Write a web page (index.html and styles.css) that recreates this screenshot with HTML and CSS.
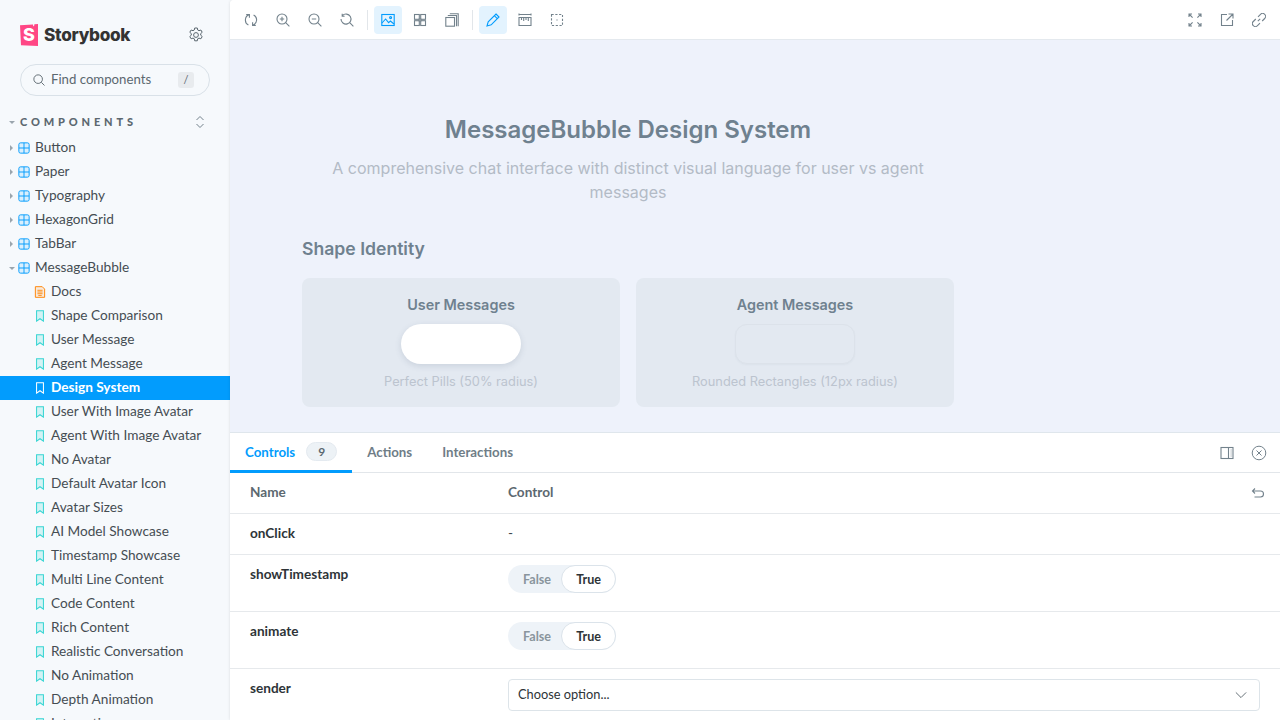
FILE: index.html
```html
<!DOCTYPE html>
<html>
<head>
    <title>MessageBubble / Design System - Storybook</title>
    <link rel="stylesheet" href="styles.css">
</head>
<body>
    <svg class="sprites" width="0" height="0">
        <symbol id="i-component" viewBox="0 0 14 14">
            <rect x="1" y="1" width="12" height="12" rx="2" fill="#a6dcfe" fill-opacity=".35" stroke="#029cfd" stroke-width="1.1"/>
            <path d="M7 1v12M1 7h12" stroke="#029cfd" stroke-width="1.1" fill="none"/>
        </symbol>
        <symbol id="i-story" viewBox="0 0 14 14">
            <path d="M3 1h8v12L7 10.2 3 13z" fill="#37d5d3" fill-opacity=".18" stroke="#37d5d3" stroke-width="1.2"/>
        </symbol>
        <symbol id="i-story-on" viewBox="0 0 14 14">
            <path d="M3 1h8v12L7 10.2 3 13z" fill="none" stroke="#fff" stroke-width="1.2"/>
        </symbol>
        <symbol id="i-docs" viewBox="0 0 14 14">
            <path d="M1.6.8h8l2.8 2.8v9.6H1.6z" fill="#ff8300" fill-opacity=".12" stroke="#ff8300" stroke-width="1.1"/>
            <path d="M4 5h6M4 7h6M4 9h6M5 11h4" stroke="#ff8300" stroke-width="1"/>
        </symbol>
    </svg>

    <div class="app">
        <aside class="sidebar">
            <div class="brand">
                <div class="logo">
                    <svg width="18" height="22" viewBox="0 0 18 22">
                        <path d="M0 1.2 13 .4l.2 1.8.9-.1.3-1.8L18 .1V21.9L1 21.2z" fill="#ff4785"/>
                    </svg>
                    <span class="logo-s">S</span>
                </div>
                <span class="brand-name">Storybook</span>
                <svg class="gear" width="16" height="16" viewBox="0 0 16 16" fill="none" stroke="#5c6870" stroke-width="1">
                    <circle cx="8" cy="8" r="2.4"/>
                    <path d="M6.7 1h2.6l.4 2 1.3.7 1.9-.7 1.3 2.3-1.5 1.3v1.6l1.5 1.3-1.3 2.3-1.9-.7-1.3.7-.4 2H6.7l-.4-2-1.3-.7-1.9.7-1.3-2.3 1.500-1.300V6.600L1.800 5.300l1.300-2.300 1.900.7 1.300-.7z" stroke-linejoin="round"/>
                </svg>
            </div>

            <div class="search">
                <svg width="12" height="12" viewBox="0 0 14 14" fill="none" stroke="#5c6870" stroke-width="1.1">
                    <circle cx="6" cy="6" r="5"/>
                    <path d="M9.7 9.7 13.4 13.4"/>
                </svg>
                <span class="search-text">Find components</span>
                <span class="search-key">/</span>
            </div>

            <div class="section-head">
                <span class="caret-down"></span>
                <span class="section-title">COMPONENTS</span>
                <svg class="section-toggle" width="10" height="14" viewBox="0 0 10 14" fill="none" stroke="#73828c" stroke-width="1">
                    <path d="M1.5 5 5 1.5 8.5 5M1.5 9 5 12.5 8.5 9"/>
                </svg>
            </div>

            <nav class="tree">
                <div class="row"><span class="caret-right"></span><svg class="ico"><use href="#i-component"/></svg>Button</div>
                <div class="row"><span class="caret-right"></span><svg class="ico"><use href="#i-component"/></svg>Paper</div>
                <div class="row"><span class="caret-right"></span><svg class="ico"><use href="#i-component"/></svg>Typography</div>
                <div class="row"><span class="caret-right"></span><svg class="ico"><use href="#i-component"/></svg>HexagonGrid</div>
                <div class="row"><span class="caret-right"></span><svg class="ico"><use href="#i-component"/></svg>TabBar</div>
                <div class="row"><span class="caret-down"></span><svg class="ico"><use href="#i-component"/></svg>MessageBubble</div>
                <div class="row child"><svg class="ico"><use href="#i-docs"/></svg>Docs</div>
                <div class="row child"><svg class="ico"><use href="#i-story"/></svg>Shape Comparison</div>
                <div class="row child"><svg class="ico"><use href="#i-story"/></svg>User Message</div>
                <div class="row child"><svg class="ico"><use href="#i-story"/></svg>Agent Message</div>
                <div class="row child selected"><svg class="ico"><use href="#i-story-on"/></svg>Design System</div>
                <div class="row child"><svg class="ico"><use href="#i-story"/></svg>User With Image Avatar</div>
                <div class="row child"><svg class="ico"><use href="#i-story"/></svg>Agent With Image Avatar</div>
                <div class="row child"><svg class="ico"><use href="#i-story"/></svg>No Avatar</div>
                <div class="row child"><svg class="ico"><use href="#i-story"/></svg>Default Avatar Icon</div>
                <div class="row child"><svg class="ico"><use href="#i-story"/></svg>Avatar Sizes</div>
                <div class="row child"><svg class="ico"><use href="#i-story"/></svg>AI Model Showcase</div>
                <div class="row child"><svg class="ico"><use href="#i-story"/></svg>Timestamp Showcase</div>
                <div class="row child"><svg class="ico"><use href="#i-story"/></svg>Multi Line Content</div>
                <div class="row child"><svg class="ico"><use href="#i-story"/></svg>Code Content</div>
                <div class="row child"><svg class="ico"><use href="#i-story"/></svg>Rich Content</div>
                <div class="row child"><svg class="ico"><use href="#i-story"/></svg>Realistic Conversation</div>
                <div class="row child"><svg class="ico"><use href="#i-story"/></svg>No Animation</div>
                <div class="row child"><svg class="ico"><use href="#i-story"/></svg>Depth Animation</div>
                <div class="row child"><svg class="ico"><use href="#i-story"/></svg>Interactions</div>
            </nav>
        </aside>

        <main class="main">
            <header class="toolbar">
                <button class="tool"><svg viewBox="0 0 14 14"><path d="M5 1.800A5.600 5.600 0 0 0 4.400 12M9 12.200A5.600 5.600 0 0 0 9.600 2"/><path d="M5.400 4.800V1.600H2.200M8.600 9.200v3.200h3.200"/></svg></button>
                <button class="tool"><svg viewBox="0 0 14 14"><circle cx="6" cy="6" r="5"/><path d="M9.700 9.700 13.400 13.400M6 3.800v4.400M3.800 6h4.400"/></svg></button>
                <button class="tool"><svg viewBox="0 0 14 14"><circle cx="6" cy="6" r="5"/><path d="M9.700 9.700 13.400 13.400M3.800 6h4.400"/></svg></button>
                <button class="tool"><svg viewBox="0 0 14 14"><path d="M2.400 2.600A5 5 0 1 1 1 6M9.700 9.700 13.400 13.400M2.200.8v2.400h2.400"/></svg></button>
                <span class="tool-sep"></span>
                <button class="tool on"><svg viewBox="0 0 14 14"><rect x=".8" y="1.500" width="12.400" height="11"/><circle cx="9.600" cy="4.600" r="1"/><path d="M1 10 4.600 6l3 3.600 1.800-1.600 3.600 3"/></svg></button>
                <button class="tool"><svg viewBox="0 0 14 14"><rect x="1.500" y="1.500" width="4.800" height="4.800"/><rect x="7.700" y="1.500" width="4.800" height="4.800"/><rect x="1.500" y="7.700" width="4.800" height="4.800"/><rect x="7.700" y="7.700" width="4.800" height="4.800"/><path d="M5 7h4M7 5v4" stroke-width="2.400" opacity=".4"/></svg></button>
                <button class="tool"><svg viewBox="0 0 14 14"><rect x=".8" y="4.500" width="8.700" height="8.700"/><path d="M2.800 2.500h8.700v10.700M4.800.8h8.400v12.400"/></svg></button>
                <span class="tool-sep"></span>
                <button class="tool on"><svg viewBox="0 0 14 14"><path d="M10 1 13 4l-7.800 7.800L1 13l1.200-4.200zM8.300 2.700l3 3"/></svg></button>
                <button class="tool"><svg viewBox="0 0 14 14"><path d="M1 1.500h12M1 .5v2M13 .5v2M1 4.500h12v8H1zM3.500 4.500v2.500M5.700 4.500v3.500M8 4.500v2.500M10.300 4.500v3.500"/></svg></button>
                <button class="tool"><svg viewBox="0 0 14 14"><rect x="1.500" y="1.500" width="11" height="11" stroke-dasharray="2.200 1.600"/><path d="M6.400 7h1.200"/></svg></button>
                <span class="tool-gap"></span>
                <button class="tool"><svg viewBox="0 0 14 14"><path d="M1 1l3.600 3.600M13 1 9.400 4.600M1 13l3.600-3.600M13 13 9.400 9.400M1 4V1h3M10 1h3v3M1 10v3h3M10 13h3v-3"/></svg></button>
                <button class="tool"><svg viewBox="0 0 14 14"><path d="M7 1.500H1.500v11h11V7M8.500 1H13v4.500M13 1 6.500 7.500"/></svg></button>
                <button class="tool"><svg viewBox="0 0 14 14"><path d="M5.800 8.200 8.200 5.800M6 3.800l2.500-2.500a2.900 2.900 0 0 1 4.200 4.200L10.200 8M8 10.200l-2.500 2.500a2.900 2.900 0 0 1-4.200-4.200L3.800 6"/></svg></button>
            </header>

            <section class="canvas">
                <div class="doc">
                    <h1 class="doc-title">MessageBubble Design System</h1>
                    <p class="doc-sub">A comprehensive chat interface with distinct visual language for user vs agent messages</p>
                    <h2 class="doc-head">Shape Identity</h2>
                    <div class="shape-grid">
                        <div class="shape-card">
                            <h3 class="shape-title">User Messages</h3>
                            <div class="bubble pill"></div>
                            <p class="shape-note">Perfect Pills (50% radius)</p>
                        </div>
                        <div class="shape-card">
                            <h3 class="shape-title">Agent Messages</h3>
                            <div class="bubble rounded"></div>
                            <p class="shape-note">Rounded Rectangles (12px radius)</p>
                        </div>
                    </div>
                </div>
            </section>

            <section class="panel">
                <div class="tabs">
                    <div class="tab active">Controls <span class="count">9</span></div>
                    <div class="tab">Actions</div>
                    <div class="tab">Interactions</div>
                    <div class="tabs-tools">
                        <svg width="14" height="14" viewBox="0 0 14 14" fill="none" stroke="#73828c" stroke-width="1.1">
                            <rect x="1" y="1.500" width="12" height="11"/>
                            <path d="M8.500 1.500v11M10.700 4h.8M10.700 6h.8M10.700 8h.8M10.700 10h.8"/>
                        </svg>
                        <svg width="16" height="16" viewBox="0 0 16 16" fill="none" stroke="#73828c" stroke-width="1">
                            <circle cx="8" cy="8" r="6.800"/>
                            <path d="M5.500 5.500l5 5M10.500 5.500l-5 5"/>
                        </svg>
                    </div>
                </div>

                <div class="args">
                    <div class="arg-row arg-head">
                        <div class="arg-name">Name</div>
                        <div class="arg-ctrl">Control</div>
                        <svg class="undo" width="14" height="14" viewBox="0 0 14 14" fill="none" stroke="#73828c" stroke-width="1.1">
                            <path d="M4 2.500 1.500 5 4 7.500M1.500 5h8a3 3 0 0 1 0 6H3.500"/>
                        </svg>
                    </div>
                    <div class="arg-row arg-plain">
                        <div class="arg-name">onClick</div>
                        <div class="arg-ctrl">-</div>
                    </div>
                    <div class="arg-row arg-tall">
                        <div class="arg-name">showTimestamp</div>
                        <div class="arg-ctrl">
                            <div class="toggle"><span class="opt">False</span><span class="opt sel">True</span></div>
                        </div>
                    </div>
                    <div class="arg-row arg-tall">
                        <div class="arg-name">animate</div>
                        <div class="arg-ctrl">
                            <div class="toggle"><span class="opt">False</span><span class="opt sel">True</span></div>
                        </div>
                    </div>
                    <div class="arg-row arg-tall">
                        <div class="arg-name">sender</div>
                        <div class="arg-ctrl">
                            <div class="select">
                                <span class="select-text">Choose option...</span>
                                <svg width="12" height="12" viewBox="0 0 14 14" fill="none" stroke="#5c6870" stroke-width="1.1"><path d="M1 4l6 6 6-6"/></svg>
                            </div>
                        </div>
                    </div>
                </div>
            </section>
        </main>
    </div>
</body>
</html>
```

FILE: styles.css
```css
* {
    box-sizing: border-box;
}

html, body {
    margin: 0;
    height: 100%;
    overflow: hidden;
}

body {
    font-family: "Lato", "Noto Sans", sans-serif;
    color: #2e3438;
    background: #f6f9fc;
}

.sprites {
    position: absolute;
}

.app {
    display: flex;
    height: 720px;
}

/* sidebar */
.sidebar {
    width: 230px;
    flex: none;
    height: 720px;
    overflow: hidden;
    background: #f6f9fc;
}

.brand {
    display: flex;
    align-items: center;
    height: 22px;
    margin: 24px 26px 0 20px;
}

.logo {
    position: relative;
    width: 18px;
    height: 22px;
}

.logo svg {
    display: block;
}

.logo-s {
    position: absolute;
    left: 3px;
    top: 2px;
    font: 800 18px/18px "Inter", sans-serif;
    color: #fff;
}

.brand-name {
    margin-left: 6px;
    font: 800 17.2px/22px "Inter", sans-serif;
    letter-spacing: -0.3px;
    color: #333;
}

.gear {
    margin-left: auto;
}

.search {
    display: flex;
    align-items: center;
    height: 32px;
    margin: 18px 20px 0;
    padding: 0 15px 0 12px;
    border: 1px solid #d9e1e8;
    border-radius: 16px;
    font-size: 13.2px;
    color: #5c6870;
}

.search-text {
    margin-left: 6px;
    padding-bottom: 2px;
    flex: 1;
}

.search-key {
    width: 16px;
    height: 16px;
    border-radius: 3px;
    background: #e8ebee;
    font-size: 11px;
    line-height: 16px;
    text-align: center;
}

.section-head {
    display: flex;
    align-items: center;
    height: 20px;
    margin: 16px 0 0 9px;
    padding-right: 25px;
}

.section-title {
    margin-left: 5px;
    padding-bottom: 2px;
    font-size: 11px;
    font-weight: 900;
    letter-spacing: 3.85px;
    color: #5c6870;
}

.section-toggle {
    margin-left: auto;
}

.caret-down {
    width: 0;
    height: 0;
    flex: none;
    border-left: 3px solid transparent;
    border-right: 3px solid transparent;
    border-top: 3px solid #9aa5ad;
}

.caret-right {
    width: 0;
    height: 0;
    flex: none;
    border-top: 3px solid transparent;
    border-bottom: 3px solid transparent;
    border-left: 3px solid #9aa5ad;
}

.tree {
    margin-top: 4px;
}

.row {
    display: flex;
    align-items: center;
    height: 24px;
    padding-left: 10px;
    padding-bottom: 3px;
    font-size: 13.65px;
    color: #454d53;
}

.row .caret-down {
    margin-top: 3px;
    margin-left: -1px;
    margin-right: 3px;
}

.row .caret-right {
    margin-top: 3px;
    margin-right: 5px;
}

.ico {
    width: 12px;
    height: 12px;
    margin-top: 3px;
    margin-right: 5px;
    flex: none;
}

.row.child {
    padding-left: 34px;
}

.row.selected {
    background: #029cfd;
    color: #fff;
    font-weight: 700;
}

/* main area */
.main {
    flex: 1;
    min-width: 0;
    display: flex;
    flex-direction: column;
    height: 720px;
    background: #fff;
    box-shadow: 0 0 3px rgba(0, 0, 0, 0.12);
    border-top-left-radius: 4px;
    overflow: hidden;
}

.toolbar {
    display: flex;
    align-items: center;
    gap: 4px;
    flex: none;
    height: 40px;
    padding: 0 7px;
    background: #fff;
    border-bottom: 1px solid #e4e9ee;
}

.tool {
    display: flex;
    align-items: center;
    justify-content: center;
    width: 28px;
    height: 28px;
    padding: 0;
    border: none;
    border-radius: 4px;
    background: none;
}

.tool svg {
    width: 14px;
    height: 14px;
    fill: none;
    stroke: #73828c;
    stroke-width: 1.1;
}

.tool.on {
    background: #e3f3fe;
}

.tool.on svg {
    stroke: #029cfd;
}

.tool-sep {
    width: 1px;
    height: 20px;
    margin: 0 2px;
    background: #e2e6ea;
}

.tool-gap {
    flex: 1;
}

/* story canvas */
.canvas {
    flex: none;
    height: 392px;
    overflow: hidden;
    background: #eef2fb;
}

.doc {
    width: 652px;
    margin-left: 72px;
    padding-top: 74px;
}

.doc-title {
    margin: 0;
    font: 600 24px/32px "Inter", sans-serif;
    color: #6f818f;
    text-align: center;
}

.doc-sub {
    margin: 10px 20px 0;
    font: 400 16px/24px "Inter", sans-serif;
    color: #b3bbc6;
    text-align: center;
}

.doc-head {
    margin: 32px 0 0;
    font: 600 17.6px/26px "Inter", sans-serif;
    color: #6f818f;
}

.shape-grid {
    display: grid;
    grid-template-columns: 1fr 1fr;
    gap: 16px;
    margin-top: 16px;
}

.shape-card {
    display: flex;
    flex-direction: column;
    align-items: center;
    height: 129px;
    padding-top: 17px;
    border-radius: 8px;
    background: #e3e9f1;
}

.shape-title {
    margin: 0;
    font: 600 14.4px/20px "Inter", sans-serif;
    color: #6f818f;
}

.bubble {
    width: 120px;
    height: 40px;
    margin-top: 9px;
}

.pill {
    border-radius: 20px;
    background: #fff;
    box-shadow: 0 2px 6px rgba(60, 80, 110, 0.15);
}

.rounded {
    border-radius: 12px;
    border: 1px solid #dce2ea;
    background: #e3e9f1;
    box-shadow: 0 1px 2px rgba(60, 80, 110, 0.04);
}

.shape-note {
    margin: 9px 0 0;
    font: 400 12.8px/18px "Inter", sans-serif;
    color: #bcc4cf;
}

/* addon panel */
.panel {
    flex: 1;
    min-height: 0;
    background: #fff;
    border-top: 1px solid #dfe6ec;
    font-size: 13.6px;
}

.tabs {
    display: flex;
    align-items: stretch;
    height: 40px;
    border-bottom: 1px solid #e2e6ea;
    padding-right: 13px;
}

.tab {
    display: flex;
    align-items: center;
    margin-bottom: -1px;
    padding: 0 15px;
    font-size: 13.3px;
    font-weight: 700;
    color: #6f7d87;
    border-bottom: 3px solid transparent;
}

.tab.active {
    color: #029cfd;
    border-bottom-color: #029cfd;
}

.count {
    width: 31px;
    height: 19px;
    margin-left: 11px;
    border: 1px solid #e4eaf0;
    border-radius: 10px;
    background: #edf2f6;
    color: #5c6870;
    font-size: 12px;
    line-height: 17px;
    text-align: center;
}

.tabs-tools {
    display: flex;
    align-items: center;
    gap: 17px;
    margin-left: auto;
}

.arg-row {
    display: flex;
    padding: 0 20px;
    border-bottom: 1px solid #e6e9ec;
}

.arg-name {
    width: 258px;
    flex: none;
    font-weight: 700;
    color: #2e3438;
}

.arg-ctrl {
    flex: 1;
    color: #3f474d;
}

.arg-head {
    height: 41px;
    align-items: center;
    padding-right: 15px;
}

.arg-head .arg-name,
.arg-head .arg-ctrl {
    padding-bottom: 3px;
    font-weight: 700;
    color: #5c6870;
}

.undo {
    flex: none;
}

.arg-plain {
    height: 41px;
    align-items: center;
}

.arg-plain .arg-name,
.arg-plain .arg-ctrl {
    padding-bottom: 3px;
}

.arg-tall {
    height: 57px;
    padding-top: 10px;
}

.arg-tall .arg-name {
    line-height: 18px;
}

.toggle {
    display: inline-flex;
    height: 28px;
    border-radius: 14px;
    background: #eef3f8;
    font-size: 12.6px;
    font-weight: 700;
}

.opt {
    display: flex;
    align-items: center;
    padding: 0 10px 0 15px;
    color: #8a959d;
}

.opt.sel {
    width: 55px;
    justify-content: center;
    padding: 0;
    border: 1px solid #dbe3ea;
    border-radius: 14px;
    background: #fff;
    color: #2e3438;
}

.select {
    display: flex;
    align-items: center;
    justify-content: space-between;
    height: 32px;
    padding: 0 12px 0 9px;
    border: 1px solid #dde4e9;
    border-radius: 4px;
    font-size: 12.8px;
    color: #2e3438;
}

.select-text {
    padding-bottom: 2px;
}
```
